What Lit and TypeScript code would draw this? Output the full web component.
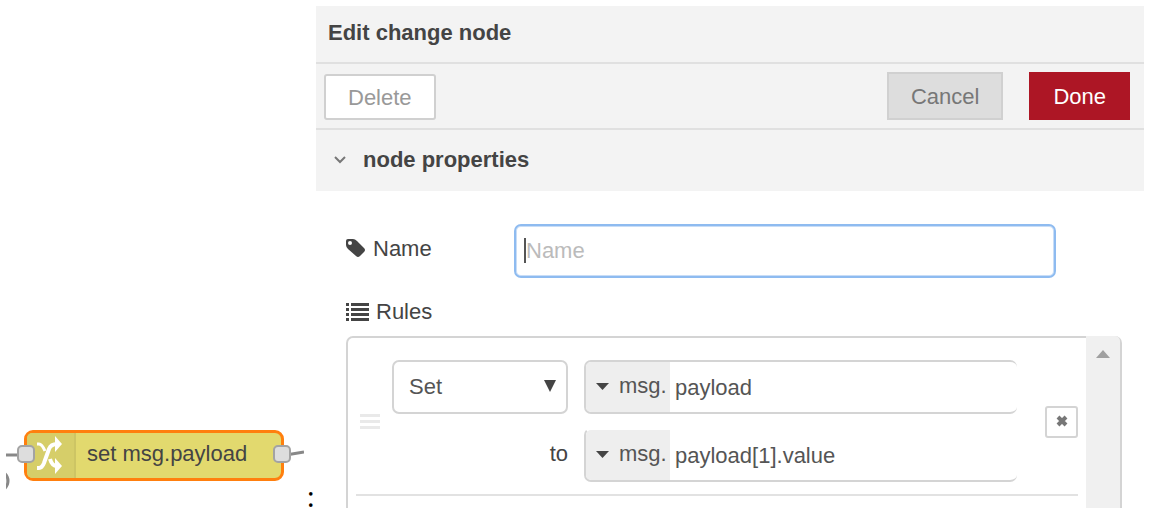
import { LitElement, html, css, svg } from "lit";
import { customElement, property } from "lit/decorators.js";

const caret = svg`<path d="M0 0H14L7 7Z" fill="currentColor" />`;

/** A flow node with its input and output ports and wires. */
@customElement("flow-node")
class FlowNode extends LitElement {
  @property() label = "";

  static styles = css`
    :host {
      display: block;
      position: relative;
      height: 62px;
      padding: 0 20px 0 18px;
      overflow: hidden;
    }
    .wires {
      position: absolute;
      inset: 0;
      width: 100%;
      height: 100%;
    }
    .node {
      position: relative;
      display: flex;
      box-sizing: border-box;
      height: 51px;
      border: 3px solid #ff7f0e;
      border-radius: 9px;
      background: #e2d96e;
      color: #444;
    }
    .icon {
      width: 47px;
      border-right: 2px solid #cdc564;
      border-radius: 5px 0 0 5px;
      background: #d6ce69;
    }
    .icon svg {
      display: block;
      width: 100%;
      height: 100%;
    }
    .text {
      flex: 1;
      padding-left: 11px;
      line-height: 41px;
      white-space: nowrap;
    }
    .port {
      position: absolute;
      top: 12px;
      width: 14px;
      height: 14px;
      border: 2px solid #a3a3a3;
      border-radius: 5px;
      background: #ddd;
    }
    .in {
      left: -10px;
    }
    .out {
      right: -10px;
    }
  `;

  render() {
    return html`
      <svg class="wires" aria-hidden="true">
        <path d="M0 25H20" stroke="#888" stroke-width="3" />
        <path d="M280 25L298 22" stroke="#888" stroke-width="3" />
        <circle cx="-8" cy="51" r="10" fill="#ddd" stroke="#888" stroke-width="3" />
      </svg>
      <div class="node">
        <span class="icon">
          <svg viewBox="0 0 47 45" aria-hidden="true">
            <g fill="none" stroke="#fff" stroke-width="4">
              <path d="M10 35H12Q15 35 17 30L22 16Q24 11 30 11" />
              <path d="M10 11H12Q15 11 18 18" stroke-width="3" />
              <path d="M23 26Q25 33 30 33" />
            </g>
            <path d="M28 3L35 11L28 19ZM28 25L35 33L28 41Z" fill="#fff" />
          </svg>
        </span>
        <span class="text">${this.label}</span>
        <span class="port in"></span>
        <span class="port out"></span>
      </div>
    `;
  }
}

/** Text field with a type selector in front of it. */
@customElement("typed-input")
class TypedInput extends LitElement {
  @property() type = "msg.";
  @property() value = "";
  @property() name = "";

  static styles = css`
    :host {
      display: flex;
      box-sizing: border-box;
      height: 54px;
      border: 2px solid #d4d4d4;
      border-right: 0;
      border-radius: 7px;
      overflow: hidden;
    }
    :host([open-top]) {
      border-top-color: transparent;
    }
    button {
      display: flex;
      align-items: center;
      gap: 10px;
      width: 84px;
      padding: 0 0 2px 10px;
      border: 0;
      background: #eee;
      color: #555;
      font: inherit;
    }
    svg {
      width: 13px;
      height: 7px;
      color: #444;
    }
    input {
      flex: 1;
      min-width: 0;
      padding: 2px 5px 0;
      border: 0;
      outline: 0;
      background: transparent;
      color: #555;
      font: inherit;
    }
  `;

  render() {
    return html`
      <button type="button">
        <svg viewBox="0 0 14 7" preserveAspectRatio="none" aria-hidden="true">${caret}</svg>${this.type}
      </button>
      <input type="text" aria-label=${this.name} .value=${this.value} />
    `;
  }
}

@customElement("app-root")
class AppRoot extends LitElement {
  static styles = css`
    :host {
      display: grid;
      grid-template-columns: 298px 12px minmax(0, 1fr);
      box-sizing: border-box;
      height: 100vh;
      padding: 6px 7px 8px 6px;
      background: #fff;
      color: #444;
      font: 22px/26px "Liberation Sans", Arial, sans-serif;
    }
    .canvas {
      align-self: end;
      margin-bottom: 16px;
    }
    .colon {
      align-self: end;
      padding-left: 3px;
      color: #000;
      font: 28px/24px "Noto Sans", sans-serif;
    }
    .panel {
      display: flex;
      flex-direction: column;
      min-height: 0;
      overflow: hidden;
    }
    h1,
    h2 {
      margin: 0;
      background: #f3f3f3;
      font-size: 22px;
      font-weight: bold;
    }
    h1 {
      padding: 14px 12px 16px;
    }
    .bar {
      display: flex;
      align-items: center;
      padding: 8px 14px 8px 8px;
      border: solid #e0e0e0;
      border-width: 2px 0;
      background: #f3f3f3;
    }
    .bar button {
      height: 48px;
      padding: 2px 22px 0;
      border: 2px solid #d0d0d0;
      background: #ddd;
      color: #777;
      font: inherit;
    }
    .bar .delete {
      height: 46px;
      margin: 2px auto 0 0;
      border-radius: 3px;
      background: #fff;
      color: #999;
    }
    .bar .done {
      margin-left: 26px;
      border-color: #ad1625;
      background: #ad1625;
      color: #fff;
    }
    h2 {
      display: flex;
      align-items: center;
      gap: 17px;
      padding: 17px 18px 18px;
    }
    h2 svg {
      width: 12px;
      height: 8px;
    }
    .form {
      display: flex;
      flex: 1;
      flex-direction: column;
      min-height: 0;
      padding: 33px 22px 0 30px;
    }
    .row {
      display: flex;
      align-items: center;
      padding-right: 66px;
    }
    .label {
      display: flex;
      align-items: center;
      gap: 7px;
    }
    .row .label {
      width: 168px;
      padding-bottom: 4px;
    }
    .field {
      position: relative;
      flex: 1;
    }
    .field input {
      box-sizing: border-box;
      width: 100%;
      height: 54px;
      padding: 0 10px;
      border: 2px solid #8ebbf0;
      border-radius: 7px;
      outline: 0;
      background: #fff;
      box-shadow: inset 0 0 0 1px #c8ddf7;
      color: #555;
      font: inherit;
    }
    .field input::placeholder {
      color: #bbb;
      opacity: 1;
    }
    .cursor {
      position: absolute;
      top: 14px;
      left: 10px;
      width: 2px;
      height: 25px;
      background: #555;
    }
    .rules-label {
      margin: 21px 0 11px;
    }
    .list {
      display: flex;
      flex: 1;
      min-height: 0;
      border: 2px solid #d4d4d4;
      border-bottom: 0;
      border-radius: 7px 7px 0 0;
    }
    .items {
      flex: 1;
      min-width: 0;
      margin: 0;
      padding: 0 8px;
      list-style: none;
      overflow: hidden;
    }
    .rule {
      display: grid;
      grid-template-columns: 20px minmax(0, 1fr) 33px;
      align-items: center;
      column-gap: 12px;
      padding: 22px 0 12px 4px;
      border-bottom: 2px solid #e2e2e2;
    }
    .grip {
      display: grid;
      gap: 3px;
    }
    .grip i {
      height: 3px;
      background: #e9e9e9;
    }
    .fields {
      display: grid;
      grid-template-columns: 176px minmax(0, 1fr);
      gap: 14px 16px;
      align-items: center;
      margin-right: 16px;
    }
    .select {
      position: relative;
    }
    select {
      box-sizing: border-box;
      width: 100%;
      height: 54px;
      padding: 0 15px;
      border: 2px solid #d4d4d4;
      border-radius: 7px;
      background: #fff;
      color: #555;
      font: inherit;
      appearance: none;
    }
    .select svg {
      position: absolute;
      top: 20px;
      right: 12px;
      width: 12px;
      height: 12px;
      pointer-events: none;
    }
    .to {
      padding-bottom: 3px;
      text-align: right;
    }
    .remove {
      display: grid;
      place-items: center;
      height: 32px;
      margin-top: 1px;
      padding: 0 0 2px;
      border: 2px solid #d4d4d4;
      border-radius: 3px;
      background: #fff;
      color: #777;
    }
    .scroll {
      width: 34px;
      margin-top: -2px;
      border-radius: 0 5px 0 0;
      background: #f0f0f0;
    }
    .scroll svg {
      display: block;
      width: 14px;
      height: 8px;
      margin: 14px auto;
    }
  `;

  render() {
    return html`
      <flow-node class="canvas" label="set msg.payload"></flow-node>
      <span class="colon">:</span>
      <section class="panel">
        <h1>Edit change node</h1>
        <div class="bar">
          <button type="button" class="delete">Delete</button>
          <button type="button">Cancel</button>
          <button type="button" class="done">Done</button>
        </div>
        <h2>
          <svg viewBox="0 0 12 8" aria-hidden="true">
            <path d="M1 1L6 6L11 1" fill="none" stroke="#777" stroke-width="2" />
          </svg>
          node properties
        </h2>
        <div class="form">
          <div class="row">
            <label class="label" for="name">
              <svg width="20" height="20" viewBox="0 0 20 20" aria-hidden="true">
                <path
                  fill="#444"
                  fill-rule="evenodd"
                  d="M0 2Q0 0 2 0H7Q9 0 11 2L18 9Q20 11 18 13L14 17Q12 19 10 17L2 10Q0 8 0 6ZM4 2A2 2 0 1 0 4 6A2 2 0 1 0 4 2Z"
                />
              </svg>
              Name
            </label>
            <div class="field">
              <input id="name" type="text" placeholder="Name" />
              <span class="cursor"></span>
            </div>
          </div>
          <div class="label rules-label">
            <svg width="23" height="18" viewBox="0 0 23 18" aria-hidden="true">
              <path
                fill="#444"
                d="M0 0H3V3H0ZM5 0H23V3H5ZM0 5H3V8H0ZM5 5H23V8H5ZM0 10H3V13H0ZM5 10H23V13H5ZM0 15H3V18H0ZM5 15H23V18H5Z"
              />
            </svg>
            Rules
          </div>
          <div class="list">
            <ul class="items">
              <li class="rule">
                <span class="grip"><i></i><i></i><i></i></span>
                <div class="fields">
                  <div class="select">
                    <select aria-label="Action">
                      <option>Set</option>
                      <option>Change</option>
                      <option>Delete</option>
                      <option>Move</option>
                    </select>
                    <svg viewBox="0 0 12 12" aria-hidden="true">
                      <path d="M0 0H12L6 12Z" fill="#444" />
                    </svg>
                  </div>
                  <typed-input name="Property" value="payload"></typed-input>
                  <span class="to">to</span>
                  <typed-input open-top name="Value" value="payload[1].value"></typed-input>
                </div>
                <button type="button" class="remove" aria-label="Remove rule">
                  <svg width="12" height="12" viewBox="0 0 12 12" aria-hidden="true">
                    <path d="M2 2L10 10M10 2L2 10" stroke="currentColor" stroke-width="4" />
                  </svg>
                </button>
              </li>
            </ul>
            <div class="scroll">
              <svg viewBox="0 0 14 8" aria-hidden="true">
                <path d="M0 8L7 0L14 8Z" fill="#a0a0a0" />
              </svg>
            </div>
          </div>
        </div>
      </section>
    `;
  }
}
